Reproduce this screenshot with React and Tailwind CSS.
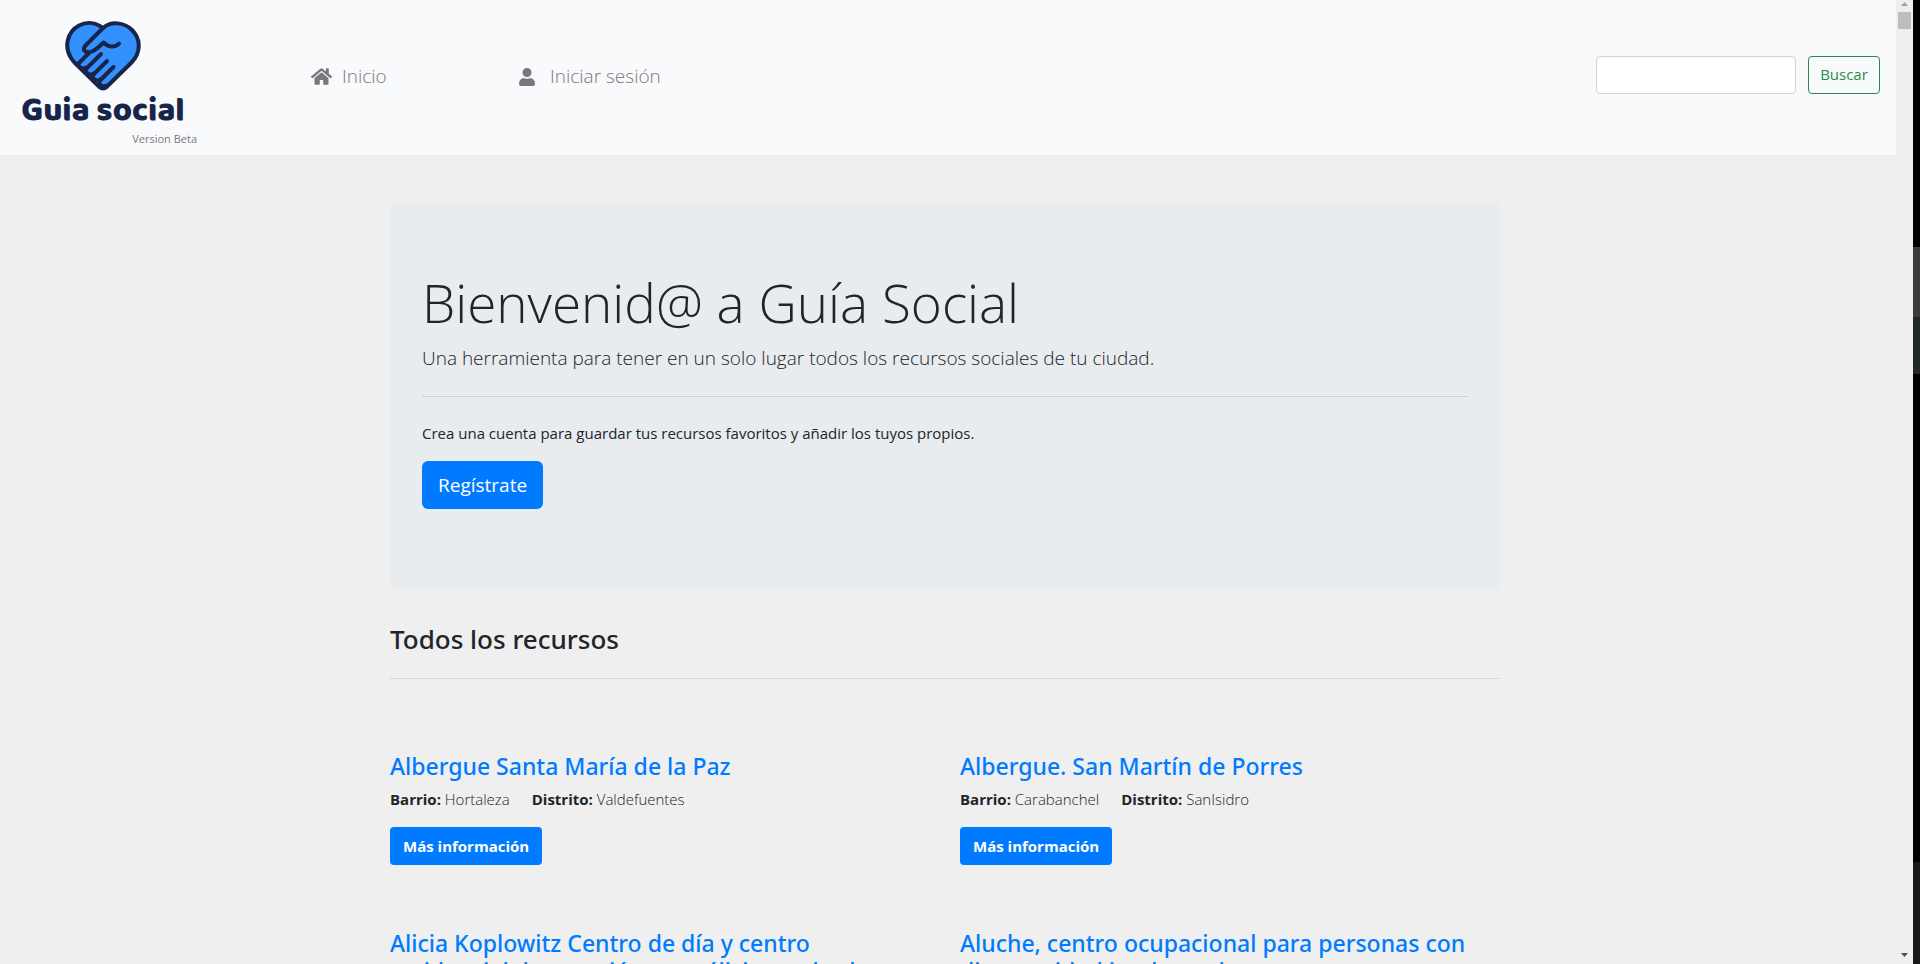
import { FaHome, FaUser } from "react-icons/fa";

const resources = [
  { name: "Albergue Santa María de la Paz", barrio: "Hortaleza", distrito: "Valdefuentes" },
  { name: "Albergue. San Martín de Porres", barrio: "Carabanchel", distrito: "SanIsidro" },
  { name: "Alicia Koplowitz Centro de día y centro residencial de atención a parálisis cerebral", barrio: "Chamartín", distrito: "Castilla" },
  { name: "Aluche, centro ocupacional para personas con discapacidad intelectual", barrio: "Latina", distrito: "Aluche" },
];

function Logo() {
  return (
    <a href="#inicio" className="flex flex-col items-center text-[#18254b]">
      <svg viewBox="0 0 76 70" className="h-[70px] w-[76px]" fill="none" stroke="currentColor" strokeWidth="4" strokeLinecap="round" strokeLinejoin="round" aria-hidden="true">
        <path d="M38 7C31 1.500 22 0.500 14 4.500C2 11-1 26 6 37C7 38.500 8.500 40.500 10 42L34.500 66C36.500 68 39.500 68 41.500 66L67 41C76 31 76 18 67 9C59 1 46 0 38 7Z" fill="#3391ff" />
        <path d="M38 7L21 24C16 29 21 33 27 30.500C30 29.500 34 26 38.500 21.500C41 24 44 25.500 47 25.500C50 25.500 52 25 54 22.500" />
        <path d="M24 32L13 43M36 33L21.500 47.500M42 40L28 54M48.500 46L35 59.500" />
        <path d="M13 43C15 47 19 48 21.500 46M20 48C22 53 26 54 28 52M27 54C29 59 33 60 35 58M34 60C35 64 38 66 41 64" strokeWidth="3" />
      </svg>
      <span className="font-['Baloo_2','Lato',sans-serif] text-[33px] leading-10 font-extrabold">Guia social</span>
    </a>
  );
}

function Resource({ name, barrio, distrito }) {
  return (
    <article className="pb-16">
      <h3 className="mb-[7px] font-['Noto_Sans',sans-serif] text-[23px] leading-7 font-medium text-[#007bff]">
        <a href="#recurso">{name}</a>
      </h3>
      <p className="mb-4 flex gap-[22px] leading-6 font-light">
        <span><b className="font-bold">Barrio:</b> {barrio}</span>
        <span><b className="font-bold">Distrito:</b> {distrito}</span>
      </p>
      <button className="h-[38px] rounded bg-[#007bff] px-[13px] font-bold text-white">Más información</button>
    </article>
  );
}

export default function App() {
  return (
    <div className="flex h-screen overflow-hidden bg-[#efefef] font-['Open_Sans',sans-serif] text-[15px] text-[#212529]">
      <div className="min-w-0 flex-1">
        <header className="flex h-[155px] items-center bg-[#f8fafc] px-4 pb-[6px] text-[#78787c]">
          <div className="flex w-[181px] flex-col pt-[18px]">
            <div className="flex w-[174px] justify-center"><Logo /></div>
            <small className="text-right text-[11px] leading-4">Version Beta</small>
          </div>
          <nav className="ml-[114px] flex flex-1 pt-1 text-[19px] font-light">
            <a href="#inicio" className="flex w-[207px] items-center gap-[10px]"><FaHome className="size-[21px]" />Inicio</a>
            <a href="#sesion" className="flex items-center gap-[14px]"><FaUser className="size-[18px]" />Iniciar sesión</a>
          </nav>
          <form className="flex gap-3" onSubmit={(e) => e.preventDefault()}>
            <input type="search" aria-label="Buscar recursos" className="h-[38px] w-[200px] rounded border border-[#ced4da] bg-white px-3" />
            <button className="h-[38px] w-[72px] rounded border border-[#2b8a4b] text-[#2b8a4b]">Buscar</button>
          </form>
        </header>
        <div className="pr-[6px]">
          <main className="mx-auto w-[1110px] max-w-full pt-12">
            <section className="h-[386px] rounded-md bg-[#e8ecef] px-8 pt-[66px]">
              <h1 className="mb-[6px] text-[53px] leading-[68px] font-light">Bienvenid@ a Guía Social</h1>
              <p className="text-[19px] leading-[30px] font-light">Una herramienta para tener en un solo lugar todos los recursos sociales de tu ciudad.</p>
              <hr className="mt-[23px] mb-6 border-[#ccd0d4]" />
              <p className="mb-4 leading-6">Crea una cuenta para guardar tus recursos favoritos y añadir los tuyos propios.</p>
              <button className="h-12 rounded-md bg-[#007bff] px-4 text-[19px] text-white">Regístrate</button>
            </section>
            <h2 className="mt-8 font-['Noto_Sans',sans-serif] text-[26px] leading-9 font-medium">Todos los recursos</h2>
            <hr className="mt-[21px] border-[#d7d7d7]" />
            <div className="mt-[73px] grid grid-cols-2 gap-x-[30px]">
              {resources.map((r) => <Resource key={r.name} {...r} />)}
            </div>
          </main>
        </div>
      </div>
      <div className="flex w-[17px] flex-col items-center justify-between" aria-hidden="true">
        <div className="flex w-full flex-col items-center gap-[6px] pt-[2px]">
          <svg viewBox="0 0 7 4" className="h-1 w-[7px]"><path d="M0 4L3.500 0L7 4Z" fill="#a3a3a3" /></svg>
          <div className="h-[17px] w-[13px] bg-[#babec1]" />
        </div>
        <svg viewBox="0 0 7 4" className="mb-[7px] h-1 w-[7px]"><path d="M0 0L3.500 4L7 0Z" fill="#505050" /></svg>
      </div>
      <div className="flex w-[7px] flex-col bg-black" aria-hidden="true">
        <div className="mt-[247px] h-[70px] bg-[#3b3b3b]" />
        <div className="h-[57px] bg-[#20282a]" />
        <div className="mt-auto h-[102px] bg-[#181916]" />
      </div>
    </div>
  );
}
